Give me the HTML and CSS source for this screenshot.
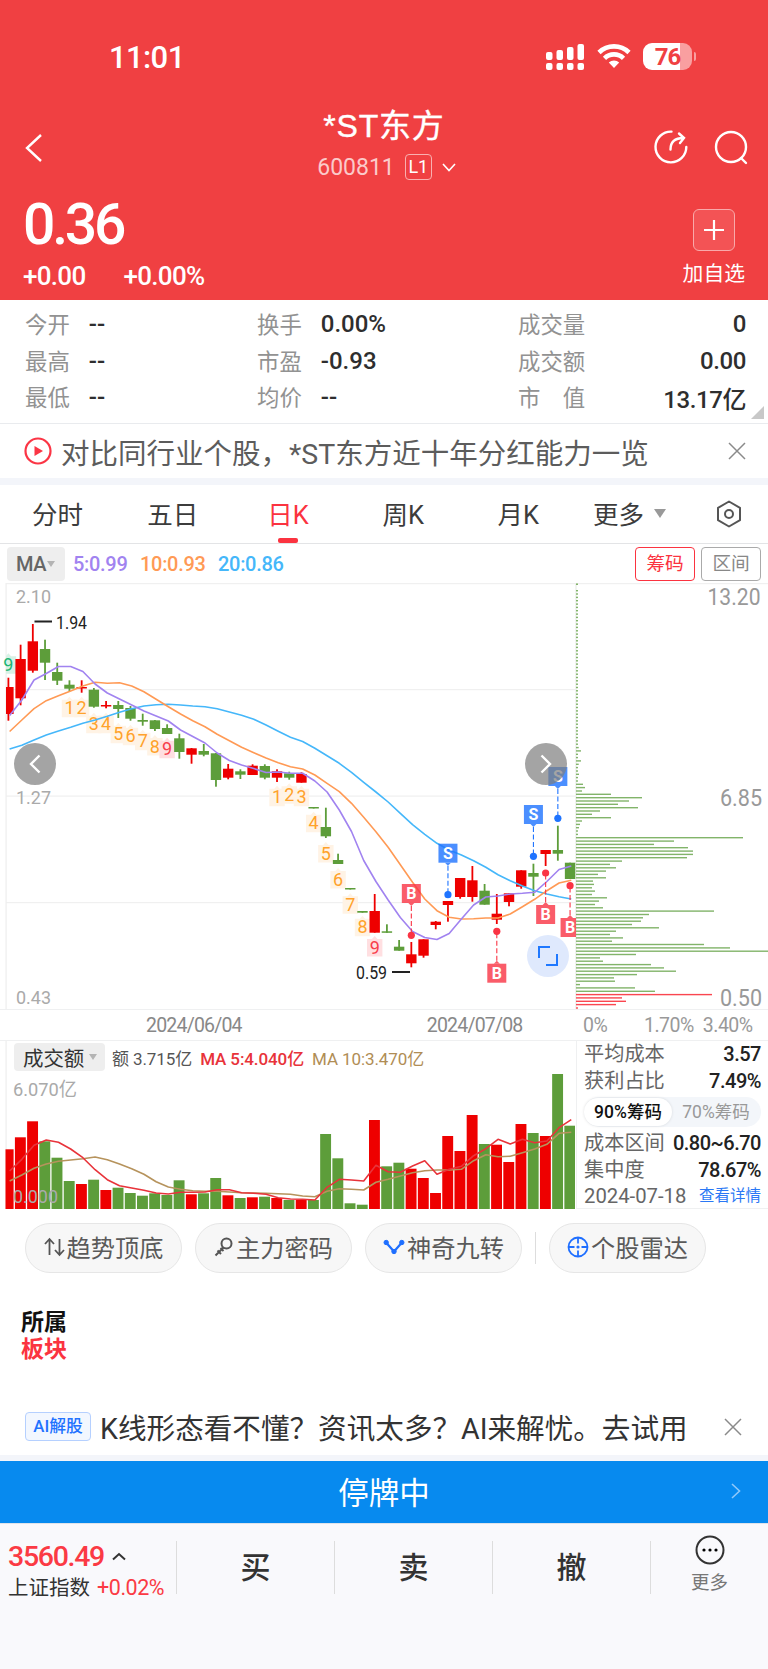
FILE: index.html
```html
<!DOCTYPE html>
<html lang="zh-CN">
<head>
  <meta charset="UTF-8">
  <title>*ST东方 600811</title>
  <link rel="stylesheet" href="styles.css">
</head>
<body>
  <header class="header">
    <div class="status-bar">
      <span class="time">11:01</span>
      <div class="status-icons">
        <svg width="39" height="28" viewBox="0 0 39 28" fill="#fff">
          <rect x="0" y="9" width="6.5" height="8" rx="2"/><rect x="10.5" y="7" width="6.5" height="10" rx="2"/>
          <rect x="21" y="4" width="6.5" height="13" rx="2"/><rect x="31.5" y="1" width="6.5" height="16" rx="2"/>
          <rect x="0" y="20" width="6.5" height="7" rx="2"/><rect x="10.5" y="20" width="6.5" height="7" rx="2"/>
          <rect x="21" y="20" width="6.5" height="7" rx="2"/><rect x="31.5" y="20" width="6.5" height="7" rx="2"/>
        </svg>
        <svg width="34" height="26" viewBox="0 0 34 26" fill="none" stroke="#fff" stroke-width="4.6">
          <path d="M2 9.5a21.5 21.5 0 0 1 30 0"/>
          <path d="M7.5 15.3a13.5 13.5 0 0 1 19 0"/>
          <path d="M17 25l-5.2-5.4a7.4 7.4 0 0 1 10.4 0z" fill="#fff" stroke="none"/>
        </svg>
        <span class="battery">76</span>
      </div>
    </div>

    <div class="nav">
      <svg class="back" width="20" height="30" viewBox="0 0 20 30" fill="none" stroke="#fff" stroke-width="2.4"><path d="M17 2L3 15l14 13"/></svg>
      <div class="title">
        <h1>*ST东方</h1>
        <div class="code">
          <span>600811</span>
          <span class="level">L1</span>
          <svg width="14" height="9" viewBox="0 0 14 9" fill="none" stroke="#fff" stroke-width="1.6"><path d="M1 1l6 6.5L13 1"/></svg>
        </div>
      </div>
      <div class="nav-icons">
        <svg width="34" height="34" viewBox="0 0 34 34" fill="none" stroke="#fff" stroke-width="2.4" stroke-linecap="round">
          <path d="M17.5 1.6A15.4 15.4 0 1 0 32.3 17"/>
          <path d="M16.5 19.5c0-8 4-11.5 13-11.5M25 3.5L30 8l-4 5"/>
        </svg>
        <svg width="34" height="36" viewBox="0 0 34 36" fill="none" stroke="#fff" stroke-width="2.4" stroke-linecap="round">
          <circle cx="17" cy="17" r="15"/><path d="M27 28l5 5"/>
        </svg>
      </div>
    </div>

    <div class="quote">
      <div>
        <div class="price">0.36</div>
        <div class="change"><span>+0.00</span><span>+0.00%</span></div>
      </div>
      <div class="add">
        <span class="add-box"><svg width="22" height="22" viewBox="0 0 22 22" stroke="#fff" stroke-width="2.2"><path d="M11 1v20M1 11h20"/></svg></span>
        <span>加自选</span>
      </div>
    </div>
  </header>

  <section class="stats">
    <div class="stat">今开<b>--</b></div>
    <div class="stat">换手<b>0.00%</b></div>
    <div class="stat wide">成交量<b>0</b></div>
    <div class="stat">最高<b>--</b></div>
    <div class="stat">市盈<b>-0.93</b></div>
    <div class="stat wide">成交额<b>0.00</b></div>
    <div class="stat">最低<b>--</b></div>
    <div class="stat">均价<b>--</b></div>
    <div class="stat wide">市　值<b>13.17亿</b></div>
    <i class="corner"></i>
  </section>

  <section class="notice">
    <svg width="28" height="28" viewBox="0 0 28 28"><circle cx="14" cy="14" r="12.5" fill="none" stroke="#fb3545" stroke-width="2.2"/><path d="M10.5 9v10l8.5-5z" fill="#fb3545"/></svg>
    <span class="notice-text">对比同行业个股，*ST东方近十年分红能力一览</span>
    <svg class="close" width="16" height="16" viewBox="0 0 16 16" stroke="#8a8a8a" stroke-width="1.5"><path d="M0 0l16 16M16 0L0 16"/></svg>
  </section>

  <nav class="tabs">
    <span>分时</span>
    <span>五日</span>
    <span class="active">日K</span>
    <span>周K</span>
    <span>月K</span>
    <span class="more">更多<i class="arrow"></i></span>
    <svg width="26" height="28" viewBox="0 0 26 28" fill="none" stroke="#555" stroke-width="2" stroke-linejoin="round"><path d="M13 1.5l11 6.3v12.4l-11 6.3-11-6.3V7.8z"/><circle cx="13" cy="14" r="4"/></svg>
  </nav>

  <div class="ma-row">
    <span class="picker">MA<i class="arrow"></i></span>
    <span class="ma5">5:0.99</span>
    <span class="ma10">10:0.93</span>
    <span class="ma20">20:0.86</span>
    <span class="btn btn-on">筹码</span>
    <span class="btn">区间</span>
  </div>

  <main class="charts">
    <div class="left">
      <div class="price-chart">
        <svg id="price" width="576" height="426" viewBox="0 583 576 426"></svg>
        <span class="round prev"><svg width="12" height="20" viewBox="0 0 12 20" fill="none" stroke="#fff" stroke-width="2.4"><path d="M10.5 1.5L2 10l8.5 8.5"/></svg></span>
        <span class="round next"><svg width="12" height="20" viewBox="0 0 12 20" fill="none" stroke="#fff" stroke-width="2.4"><path d="M1.5 1.5L10 10l-8.5 8.5"/></svg></span>
        <span class="round expand"><svg width="20" height="20" viewBox="0 0 20 20" fill="none" stroke="#1f78ff" stroke-width="2"><path d="M1 12V1h11M19 8v11H8"/></svg></span>
      </div>
      <div class="dates"><span>2024/06/04</span><span>2024/07/08</span></div>
      <div class="volume">
        <div class="volume-head">
          <span class="picker">成交额<i class="arrow"></i></span>
          <span>额 3.715亿</span>
          <span class="v5">MA 5:4.040亿</span>
          <span class="v10">MA 10:3.470亿</span>
        </div>
        <svg id="volume" width="576" height="136" viewBox="0 1073 576 136"></svg>
      </div>
    </div>

    <aside class="right">
      <svg id="chips" width="192" height="426" viewBox="576 583 192 426"></svg>
      <div class="percents"><span>0%</span><span>1.70%</span><span>3.40%</span></div>
      <div class="cost">
        <div class="cost-row">平均成本<b>3.57</b></div>
        <div class="cost-row">获利占比<b>7.49%</b></div>
        <div class="switch"><span class="on">90%筹码</span><span>70%筹码</span></div>
        <div class="cost-row">成本区间<b>0.80~6.70</b></div>
        <div class="cost-row">集中度<b>78.67%</b></div>
        <div class="cost-row"><span class="day">2024-07-18</span><a>查看详情</a></div>
      </div>
    </aside>
  </main>

  <section class="tools">
    <span class="tool">
      <svg width="21" height="20" viewBox="0 0 21 20" fill="none" stroke="#555" stroke-width="1.8"><path d="M5.5 18V2.5M1 7l4.5-5L10 7M15.5 2v15.5M11 13l4.5 5 4.5-5"/></svg>趋势顶底
    </span>
    <span class="tool">
      <svg width="20" height="20" viewBox="0 0 20 20" fill="none" stroke="#555" stroke-width="2"><circle cx="12.5" cy="6.5" r="5"/><path d="M9.5 10.5l-8 8M3.5 13.5l3.5 3.5M6.5 11l3 3"/></svg>主力密码
    </span>
    <span class="tool">
      <svg width="22" height="16" viewBox="0 0 22 16" fill="#1f6fff" stroke="#1f6fff"><path d="M3.5 4l7.5 8.5L18.5 4" fill="none" stroke-width="2.2"/><circle cx="3.2" cy="3.5" r="2.2"/><circle cx="18.8" cy="3.5" r="2.2"/><circle cx="11" cy="12.5" r="2.2"/></svg>神奇九转
    </span>
    <i class="divider"></i>
    <span class="tool">
      <svg width="22" height="22" viewBox="0 0 22 22" fill="none" stroke="#1f6fff" stroke-width="1.8"><circle cx="11" cy="11" r="9.5"/><path d="M11 1.5v6M11 14.5v6M1.5 11h6M14.5 11h6"/><circle cx="11" cy="11" r="1.6" fill="#1f6fff" stroke="none"/></svg>个股雷达
    </span>
  </section>

  <section class="board">
    <div>所属</div>
    <div class="red">板块</div>
  </section>

  <section class="ai">
    <span class="ai-tag">AI解股</span>
    <span class="ai-text">K线形态看不懂？资讯太多？AI来解忧。去试用</span>
    <svg class="close" width="16" height="16" viewBox="0 0 16 16" stroke="#8a8a8a" stroke-width="1.5"><path d="M0 0l16 16M16 0L0 16"/></svg>
  </section>

  <div class="halt">
    停牌中
    <svg width="10" height="16" viewBox="0 0 10 16" fill="none" stroke="#8fc8fa" stroke-width="1.6"><path d="M1 1l7.5 7L1 15"/></svg>
  </div>

  <footer class="footer">
    <div class="index">
      <div class="index-value">3560.49<svg width="14" height="9" viewBox="0 0 14 9" fill="none" stroke="#333" stroke-width="2"><path d="M1 7.5l6-5.5 6 5.5"/></svg></div>
      <div class="index-name">上证指数 <span>+0.02%</span></div>
    </div>
    <span class="trade">买</span>
    <span class="trade">卖</span>
    <span class="trade">撤</span>
    <div class="footer-more">
      <svg width="30" height="30" viewBox="0 0 30 30"><circle cx="15" cy="15" r="13.5" fill="none" stroke="#333" stroke-width="2"/><circle cx="9" cy="15" r="1.6"/><circle cx="15" cy="15" r="1.6"/><circle cx="21" cy="15" r="1.6"/></svg>
      更多
    </div>
  </footer>

  <script src="script.js"></script>
</body>
</html>
```
FILE: styles.css
```css
* {
  margin: 0;
  padding: 0;
  box-sizing: border-box;
}

body {
  width: 768px;
  height: 1669px;
  background: #fff;
  color: #333;
  overflow: hidden;
  font-family: Roboto, 'Noto Sans CJK SC', sans-serif;
  white-space: nowrap;
}

svg {
  display: block;
  flex: none;
  overflow: visible;
}

b {
  font-weight: 500;
}

/* header */
.header {
  height: 300px;
  background: #f04042;
  color: #fff;
}

.status-bar {
  display: flex;
  justify-content: space-between;
  height: 100px;
  padding: 43px 76px 0 109px;
}

.time {
  font-size: 31px;
  font-weight: 500;
  line-height: 29px;
  letter-spacing: -0.6px;
}

.status-icons {
  display: flex;
  gap: 12px;
}

.battery {
  position: relative;
  width: 49px;
  height: 27px;
  border-radius: 9px;
  background: linear-gradient(90deg, #fff 76%, #f99fa0 76%);
  color: #f04042;
  font-size: 24px;
  font-weight: 700;
  line-height: 28px;
  letter-spacing: -1px;
  text-align: center;
}

.battery::after {
  content: '';
  position: absolute;
  right: -4px;
  top: 9px;
  width: 2px;
  height: 9px;
  border-radius: 0 2px 2px 0;
  background: #f99fa0;
}

.nav {
  display: grid;
  grid-template-columns: 140px 1fr 140px;
  height: 92px;
}

.back {
  margin: 33px 0 0 24px;
}

.title {
  text-align: center;
}

.title h1 {
  font-family: 'Liberation Sans', 'Noto Sans CJK SC', sans-serif;
  font-size: 32px;
  font-weight: 400;
  line-height: 53px;
  letter-spacing: 0.8px;
  -webkit-text-stroke: 0.4px #fff;
}

.code {
  display: flex;
  justify-content: center;
  align-items: center;
  height: 28px;
  padding-left: 5px;
  font-size: 23px;
  color: #fbcaca;
}

.level {
  width: 27px;
  height: 26px;
  margin: 0 10px 0 10px;
  border: 1px solid #f9b0b0;
  border-radius: 4px;
  color: #fff;
  font-size: 18px;
  line-height: 24px;
}

.nav-icons {
  display: flex;
  gap: 26px;
  padding: 30px 0 0 26px;
}

.quote {
  display: flex;
  justify-content: space-between;
  padding: 0 23px 0 23px;
}

.price {
  font-size: 57px;
  font-weight: 500;
  line-height: 66px;
  letter-spacing: -3.2px;
}

.change {
  display: flex;
  gap: 38px;
  font-size: 26px;
  font-weight: 500;
  line-height: 37px;
  letter-spacing: -0.7px;
}

.add {
  display: flex;
  flex-direction: column;
  align-items: center;
  padding-top: 17px;
  font-size: 20.8px;
  line-height: 46px;
}

.add-box {
  display: flex;
  align-items: center;
  justify-content: center;
  width: 42px;
  height: 42px;
  border: 1px solid #f9a9aa;
  border-radius: 6px;
  background: #f35355;
}

/* key figures */
.stats {
  position: relative;
  display: grid;
  grid-template-columns: 232px 261px 228px;
  grid-auto-rows: 36.6px;
  height: 124px;
  padding: 5px 0 0 25px;
  border-bottom: 1px solid #e9ebee;
}

.stat {
  display: flex;
  align-items: center;
  gap: 19px;
  font-size: 22.4px;
  color: #929292;
}

.stat b {
  font-size: 24px;
  color: #2e2e2e;
  padding-top: 2px;
}

.stat.wide {
  justify-content: space-between;
}

.stat.wide b {
  letter-spacing: -0.4px;
}

.corner {
  position: absolute;
  right: 4px;
  bottom: 4px;
  border-left: 13px solid transparent;
  border-bottom: 13px solid #c8c8c8;
}

.notice {
  display: flex;
  align-items: center;
  height: 61px;
  padding: 0 23px 0 24px;
  border-bottom: 7px solid #f3f5fa;
  font-size: 28.5px;
  color: #5c5c5c;
}

.notice-text {
  margin: 0 0 0 9px;
}

.close {
  margin-left: auto;
}

/* period tabs */
.tabs {
  display: flex;
  align-items: center;
  height: 59px;
  border-bottom: 1px solid #e3e4e6;
  font-size: 25.5px;
  color: #3c3c3c;
}

.tabs > span {
  position: relative;
  top: -2px;
  width: 115.2px;
  text-align: center;
}

.tabs .active {
  color: #fb3340;
}

.tabs .active::after {
  content: '';
  position: absolute;
  left: 48px;
  bottom: -12px;
  width: 20px;
  height: 5px;
  border-radius: 2px;
  background: #fb3340;
}

.tabs .more {
  display: flex;
  align-items: center;
  gap: 10px;
  width: 140px;
  padding-left: 17px;
}

.arrow {
  border: 6.5px solid transparent;
  border-top: 9px solid #999;
  border-bottom: 0;
}

.more .arrow {
  margin-top: 3px;
}

.picker .arrow {
  border-width: 6px 4px 0;
  border-top-color: #b4b4b4;
}

.ma-row {
  display: flex;
  align-items: center;
  height: 39px;
  padding: 0 7px;
  font-size: 20px;
  font-weight: 500;
  letter-spacing: -0.3px;
}

.picker {
  display: flex;
  align-items: center;
  border-radius: 4px;
  background: #eee;
}

.ma-row .picker {
  width: 58px;
  height: 34px;
  margin-right: 8px;
  padding-left: 9px;
  gap: 1px;
  color: #666;
}

.ma5 {
  color: #a183f0;
  width: 67px;
}

.ma10 {
  color: #ff9a55;
  width: 78px;
}

.ma20 {
  color: #45b7fa;
}

.btn {
  width: 60px;
  height: 34px;
  margin-left: 6px;
  border: 1px solid #aaa;
  border-radius: 4px;
  color: #888;
  font-size: 18.7px;
  font-weight: 400;
  line-height: 32px;
  text-align: center;
}

.btn-on {
  margin-left: auto;
  border-color: #fb3340;
  color: #fb3340;
}

/* charts */
.charts {
  display: grid;
  grid-template-columns: 576px 192px;
  height: 626px;
}

.price-chart {
  position: relative;
}

.round {
  position: absolute;
  display: flex;
  align-items: center;
  justify-content: center;
  width: 42px;
  height: 42px;
  border-radius: 50%;
  background: rgba(125, 125, 125, 0.7);
}

.prev {
  left: 14px;
  top: 160px;
}

.next {
  left: 525px;
  top: 160px;
}

.expand {
  left: 527px;
  top: 352px;
  background: #dfe9fd;
}

.dates {
  display: flex;
  height: 32px;
  padding-left: 146px;
  gap: 185px;
  border-top: 1px solid #eff0f1;
  border-bottom: 1px solid #eff0f1;
  font-size: 19.5px;
  line-height: 31px;
  letter-spacing: -0.8px;
  color: #888;
}

.volume-head {
  display: flex;
  align-items: center;
  gap: 8px;
  height: 32px;
  padding-left: 14px;
  font-size: 17px;
  letter-spacing: -0.1px;
  color: #555;
}

.volume-head .picker {
  width: 91px;
  height: 28px;
  padding-left: 9px;
  gap: 5px;
  font-size: 20.5px;
  color: #333;
  margin-right: -1px;
}

.v5 {
  color: #e8333a;
  font-weight: 500;
}

.v10 {
  color: #b08d55;
}

.axis {
  font-size: 19px;
  fill: #aaa;
}

.axis-right {
  font-size: 23px;
  fill: #999;
}

.extreme {
  font-size: 17.5px;
  fill: #222;
}

.count {
  font-size: 18px;
  text-anchor: middle;
}

.mark {
  font-size: 16px;
  font-weight: 700;
  text-anchor: middle;
  fill: #fff;
}

.percents {
  display: flex;
  height: 32px;
  padding-left: 7px;
  border-top: 1px solid #eff0f1;
  border-bottom: 1px solid #eff0f1;
  font-size: 19.5px;
  line-height: 31px;
  letter-spacing: -0.5px;
  color: #999;
}

.percents span:first-child {
  width: 61px;
}

.percents span:last-child {
  margin-left: 9px;
}

.cost {
  height: 168px;
  padding: 0 7px;
  border-left: 1px solid #eff0f1;
  border-bottom: 1px solid #eff0f1;
}

.cost-row {
  display: flex;
  align-items: center;
  justify-content: space-between;
  height: 26.5px;
  font-size: 20.2px;
  line-height: 26px;
  color: #666;
}

.cost-row b {
  font-size: 20px;
  letter-spacing: -0.5px;
  color: #222;
}

.cost-row .day {
  font-size: 20.3px;
}

.cost-row a {
  font-size: 15.5px;
  color: #2a78f5;
}

.switch {
  display: flex;
  align-items: center;
  height: 30px;
  margin: 3px 0;
  border-radius: 15px;
  background: #f3f6fa;
  font-size: 17.5px;
  color: #999;
}

.switch span {
  width: 88px;
  line-height: 28px;
  text-align: center;
}

.switch .on {
  border-radius: 14px;
  background: #fff;
  box-shadow: 0 0 3px rgba(0, 0, 0, 0.12);
  color: #111;
  font-weight: 500;
}

/* shortcuts under the chart */
.tools {
  display: flex;
  align-items: center;
  gap: 13px;
  height: 77px;
  padding-left: 25px;
}

.tool {
  display: flex;
  align-items: center;
  justify-content: center;
  gap: 2px;
  width: 157px;
  height: 50px;
  padding-bottom: 2px;
  border: 1px solid #e6e6e6;
  border-radius: 25px;
  background: #f7f7f7;
  font-size: 24.2px;
  color: #5a5a5a;
}

.divider {
  width: 1px;
  height: 32px;
  background: #ddd;
}

.board {
  height: 114px;
  padding: 23px 21px 0;
  font-size: 23px;
  font-weight: 700;
  line-height: 27px;
  color: #111;
}

.board .red {
  color: #fb3340;
}

.ai {
  display: flex;
  align-items: center;
  height: 61px;
  padding: 0 27px 2px 25px;
  border-bottom: 6px solid #f3f5fa;
}

.ai-tag {
  width: 66px;
  height: 29px;
  border: 1px solid #b5d0ff;
  border-radius: 4px;
  background: #f2f7ff;
  color: #2272ff;
  font-size: 16.8px;
  font-weight: 500;
  line-height: 27px;
  text-align: center;
}

.ai-text {
  margin-left: 9px;
  font-size: 28.6px;
  color: #333;
}

.halt {
  display: grid;
  grid-template-columns: 1fr auto 1fr;
  align-items: center;
  height: 62px;
  padding-bottom: 2px;
  background: #078aef;
  color: #fff;
  font-size: 30.5px;
}

.halt::before {
  content: '';
}

.halt svg {
  justify-self: end;
  margin-right: 27px;
}

/* bottom bar */
.footer {
  display: flex;
  height: 146px;
  padding-top: 17px;
  background: #f9f9fc;
  border-top: 1px solid #dfe3ea;
}

.index {
  width: 177px;
  height: 53px;
  padding-left: 8px;
  border-right: 1px solid #ddd;
}

.index-value {
  display: flex;
  align-items: center;
  gap: 8px;
  height: 31px;
  font-size: 28.5px;
  font-weight: 500;
  letter-spacing: -1.3px;
  color: #fb3a44;
}

.index-name {
  font-size: 20.5px;
  line-height: 32px;
}

.index-name span {
  margin-left: 2px;
  font-size: 21.5px;
  letter-spacing: -0.5px;
  color: #fb3a44;
}

.trade {
  width: 158px;
  height: 53px;
  border-right: 1px solid #ddd;
  font-size: 30px;
  font-weight: 500;
  line-height: 53px;
  text-align: center;
}

.footer-more {
  display: flex;
  flex-direction: column;
  align-items: center;
  width: 117px;
  margin-top: -6px;
  font-size: 18.5px;
  line-height: 37px;
  color: #777;
}
```
FILE: script.js
```js
const RED = '#ee0000';
const GREEN = '#5d9d3a';
const STEP = 12.21;
const cx = i => 8.4 + i * STEP;

// [colour, high, body top, body bottom, low]
const candles = [
  ['r', 677.7, 687, 714, 720.7], ['r', 644.7, 659, 698.3, 705.3], ['r', 624, 641.3, 670.7, 672.7],
  ['g', 639.7, 649, 662.7, 680], ['g', 662.7, 672, 680.7, 685], ['g', 680.3, 684.7, 688.7, 691.3],
  ['r', 680.3, 687, 688.5, 692.7], ['g', 688, 689.7, 706.7, 707.7], ['r', 701, 705, 706.5, 708.3],
  ['g', 701, 705, 709, 718], ['g', 706, 708, 718.7, 720.7], ['g', 713.7, 720, 721.7, 725.7],
  ['g', 720, 720.3, 729, 731], ['g', 724.3, 728, 734, 734], ['g', 733.7, 738.3, 752, 758.7],
  ['r', 748, 748.3, 754.7, 763.7], ['g', 744, 751, 754.7, 756.3], ['g', 753, 753.3, 780, 786.7],
  ['r', 764, 768.7, 777.7, 779.3], ['g', 769.3, 771.3, 774.7, 779], ['r', 764.3, 765.7, 775, 775],
  ['g', 764.3, 766, 777.7, 779.3], ['r', 769.3, 771.3, 777.7, 782], ['g', 771.7, 773.3, 777.7, 779.7],
  ['r', 772.3, 774, 782.7, 782.7], ['g', 807, 807, 808.5, 808.5], ['g', 807.7, 827, 836.3, 838],
  ['g', 853.7, 860, 864, 864], ['g', 888, 888, 889.5, 889.5], ['g', 911, 911, 912.7, 912.7],
  ['r', 894, 911, 932.7, 932.7], ['g', 924.3, 931.3, 932.8, 932.8], ['g', 940, 946.7, 950.7, 950.7],
  ['r', 942, 954.3, 963.3, 967.3], ['r', 939.3, 939.3, 955.7, 957.7], ['r', 921, 921.7, 925, 929.3],
  ['r', 901, 901, 905, 921.7], ['r', 878, 878, 897, 898.7], ['r', 866, 880.3, 897, 901.7],
  ['g', 884, 890.7, 904.7, 904.7], ['r', 894, 913.7, 919.7, 924], ['r', 893.3, 893.3, 902, 906.3],
  ['r', 870.3, 870.3, 886.7, 888.7], ['g', 863.7, 873, 876.7, 896], ['r', 850, 850, 854, 866],
  ['g', 825.7, 850, 853.7, 860.7], ['g', 862.7, 862.7, 879, 879]
];

const ma5 = [715.5, 700, 680, 673.5, 666.5, 666.5, 671.5, 684, 693, 699, 705, 711, 716, 721, 730, 736.5, 743, 753, 760.5, 765, 768.5, 772.5, 772, 773.3, 773.3, 781, 792, 810, 831.5, 860.5, 881.5, 900, 917.5, 931.5, 937.5, 939.5, 933.5, 919, 905, 897, 896, 894, 893.3, 892.3, 881.5, 869.5, 866];
const ma10 = [731.5, 720, 708.7, 700.7, 695.7, 691, 686, 682.3, 683.3, 682.7, 686, 691.7, 699.3, 706.7, 714, 720.7, 726.7, 734.3, 740.7, 747.3, 752.7, 758, 762.7, 766.7, 769, 775, 783.3, 791.7, 803.3, 817.3, 831.7, 847.3, 864.7, 882.3, 899, 910.7, 917.3, 919, 918.7, 918, 918, 914, 906.7, 899.3, 890.7, 883, 880.3];
const ma20 = [749, 745.3, 740, 735, 731, 727.3, 723.3, 720, 716.3, 712.3, 708.7, 706, 704.7, 704.3, 705, 706, 706.7, 708.7, 712, 715.3, 719.3, 725, 731.3, 737.3, 741.5, 748.3, 755.7, 763.3, 772.3, 782.3, 792, 802, 813.3, 824.7, 834.3, 843.3, 850, 855, 860.7, 867.3, 874.7, 880.7, 886, 890.7, 894, 896.7, 899];

// [candle, y, digit, colour]
const counts = [
  [0, 664.3, 9, 'g'], [5, 707.7, 1], [6, 707.7, 2], [7, 723.7, 3], [8, 723.7, 4], [9, 733.7, 5],
  [10, 735.7, 6], [11, 740.7, 7], [12, 746, 8], [13, 748.7, 9, 'r'], [22, 796.7, 1], [23, 794.3, 2],
  [24, 796.7, 3], [25, 822.7, 4], [26, 853, 5], [27, 879, 6], [28, 904.3, 7], [29, 926.7, 8], [30, 947, 9, 'r']
];

// [candle, letter, box top, dot y]
const marks = [
  [36, 'S', 843.7, 894.7], [43, 'S', 805, 856.3], [45, 'S', 767, 818.3],
  [33, 'B', 884, 935.3], [40, 'B', 963.7, 931.3], [44, 'B', 905, 873], [46, 'B', 918, 885.7]
];

const volumes = [1149.3, 1137.3, 1121.3, 1141.3, 1157.7, 1181, 1184, 1179.7, 1190, 1187.7, 1193, 1195.7, 1193.3, 1195, 1180.3, 1194.3, 1193.3, 1178, 1195.3, 1198, 1197.3, 1196.7, 1198, 1200, 1199.7, 1200, 1134, 1158.3, 1203.3, 1204.7, 1120, 1166.3, 1162.7, 1168.7, 1178, 1193, 1136, 1151, 1115, 1144, 1144.7, 1162, 1124, 1133, 1136, 1074, 1125.7];
const vol5 = [1171, 1159.3, 1145.3, 1140, 1142.3, 1149, 1157.7, 1169.7, 1179.7, 1185.7, 1188, 1190.3, 1193, 1194, 1192.3, 1192.3, 1192, 1189.7, 1189.7, 1192.7, 1193.3, 1194.3, 1197.7, 1199, 1199.3, 1200, 1187.3, 1179.3, 1180, 1181, 1165.3, 1171.7, 1172.3, 1166, 1160.7, 1174.3, 1169.3, 1166.3, 1155.7, 1148.7, 1139.3, 1144, 1139.3, 1142.7, 1141, 1127.7, 1119.7];
const vol10 = [1181, 1175, 1168.3, 1164, 1161.3, 1160, 1158.7, 1157, 1159.7, 1164, 1168.7, 1174.3, 1181.7, 1187, 1189.3, 1190.7, 1191.3, 1191.3, 1192, 1192.7, 1193, 1193.3, 1193.7, 1194.3, 1196, 1196.7, 1191.3, 1188.7, 1189.3, 1190, 1182.3, 1179.3, 1176, 1172.7, 1170.7, 1170, 1170, 1169.3, 1160.7, 1154.7, 1156.7, 1156.3, 1152.7, 1149, 1144.3, 1133.3, 1132.3];

// chip distribution, lengths from the 48th level down
const chips = [2.7, 5, 2, 2, 5, 2.7, 2, 2, 3, 2, 2, 7, 9, 6, 35, 66, 53, 42, 62, 24, 16, 35, 6, 4, 3, 2, 2, 167, 98, 78, 112, 117, 117, 111, 46, 34, 40, 30, 22, 30, 17, 18, 16, 19, 16, 31, 23, 19, 27, 138, 73, 67, 65, 56, 83, 40, 34, 47, 36, 128, 154, 192, 60, 24, 27, 75, 88, 100, 61, 38, 39, 4, 59, 79, 136, 46, 50, 40, 2];

const rect = (x, y, w, h, fill) => `<rect x="${x}" y="${y}" width="${w}" height="${h}" fill="${fill}"/>`;
const line = (values, color) =>
  `<polyline fill="none" stroke="${color}" stroke-width="1.6" stroke-linejoin="round" points="${values.map((y, i) => `${cx(i + 0.1)},${y}`).join(' ')}"/>`;
const text = (x, y, cls, value, extra = '') => `<text x="${x}" y="${y}" class="${cls}" ${extra}>${value}</text>`;
const fit = w => `textLength="${w}" lengthAdjust="spacingAndGlyphs"`;

function drawPrice() {
  let out = '';
  [583, 689, 795.5, 902].forEach(y => out += rect(6, y, 570, 1.2, '#f0f0f0'));
  out += rect(5.5, 583, 1.2, 426, '#eee');
  out += text(16, 603, 'axis', '2.10', fit(35)) + text(16, 803.5, 'axis', '1.27', fit(35)) + text(16, 1004, 'axis', '0.43', fit(35));

  counts.forEach(([i, y, n, c]) => {
    const x = cx(i);
    const bg = c === 'r' ? '#ffdfe1' : c === 'g' ? '#d8f1e5' : '#fff3e5';
    const fg = c === 'r' ? '#f83e4c' : c === 'g' ? '#20b573' : '#ffa22b';
    const left = Math.max(x - 7.7, 6);
    out += `<path d="M${left} ${y - 8}H${x - 2.7}l2.7-3 2.7 3h5v17.5H${left}z" fill="${bg}"/>`;
    out += text(x, y + 6.5, 'count', n, `fill="${fg}"`);
  });

  candles.forEach(([c, high, top, bottom, low], i) => {
    const color = c === 'r' ? RED : GREEN;
    const x = cx(i);
    const left = Math.max(x - 5.2, 6);
    out += rect(x - 0.9, high, 1.8, low - high, color);
    out += rect(left, top, x + 5.2 - left, bottom - top, color);
  });

  out += line(ma20, '#45b7fa') + line(ma10, '#ff9a55') + line(ma5, '#a183f0');
  out += rect(34.5, 620.5, 17.5, 2, '#222') + text(56, 628.5, 'extreme', '1.94', fit(31));
  out += rect(392, 971, 18, 2, '#222') + text(356, 979, 'extreme', '0.59', fit(31));

  marks.forEach(([i, letter, top, dot]) => {
    const x = cx(i);
    const color = letter === 'S' ? '#1f74ff' : '#fa3444';
    const above = top < dot;
    const edge = above ? top + 19 : top;
    const tip = above ? edge + 3 : edge - 3;
    const right = Math.min(x + 9.5, 576);
    out += `<path d="M${x} ${tip}V${dot}" stroke="${color}" stroke-width="1.1" stroke-dasharray="5 2.5"/>`;
    out += `<circle cx="${x}" cy="${dot}" r="3.6" fill="${color}"/>`;
    out += `<g opacity="0.8">${rect(x - 9.5, top, right - x + 9.5, 19, color)}<path d="M${x - 3} ${edge}L${x} ${tip}L${x + 3} ${edge}z" fill="${color}"/></g>`;
    out += text(x, top + 15.2, 'mark', letter);
  });
  document.getElementById('price').innerHTML = out;
}

function drawVolume() {
  let out = rect(5.5, 1041, 1.2, 168, '#eee');
  volumes.forEach((top, i) => {
    const left = Math.max(cx(i) - 5.7, 5.5);
    const right = Math.min(cx(i) + 5.2, 575);
    out += rect(left, top, right - left, 1209 - top, candles[i][0] === 'r' ? RED : GREEN);
  });
  out += line(vol10, '#b6935c') + line(vol5, '#e8333a');
  out += text(13, 1095.5, 'axis', '6.070亿', fit(64)) + text(13, 1202.5, 'axis', '0.000', fit(45));
  document.getElementById('volume').innerHTML = out;
}

function drawChips() {
  let out = rect(576, 583, 192, 1.2, '#f0f0f0') + rect(575.5, 583, 1, 426, '#e4e8e2');
  out += rect(576, 583.5, 2, 1.4, '#77ac5b');
  for (let i = 0; i < 126; i++) {
    const width = i < 47 ? 2 : chips[i - 47];
    out += rect(576, (590 + i * 3.338).toFixed(1), width, 1.4, i > 120 ? '#fa4650' : '#82b46a');
  }
  out += text(707.5, 604.5, 'axis-right', '13.20', fit(53)) + text(720, 805.5, 'axis-right', '6.85', fit(42)) + text(720, 1005.5, 'axis-right', '0.50', fit(42));
  document.getElementById('chips').innerHTML = out;
}

drawPrice();
drawVolume();
drawChips();
```
